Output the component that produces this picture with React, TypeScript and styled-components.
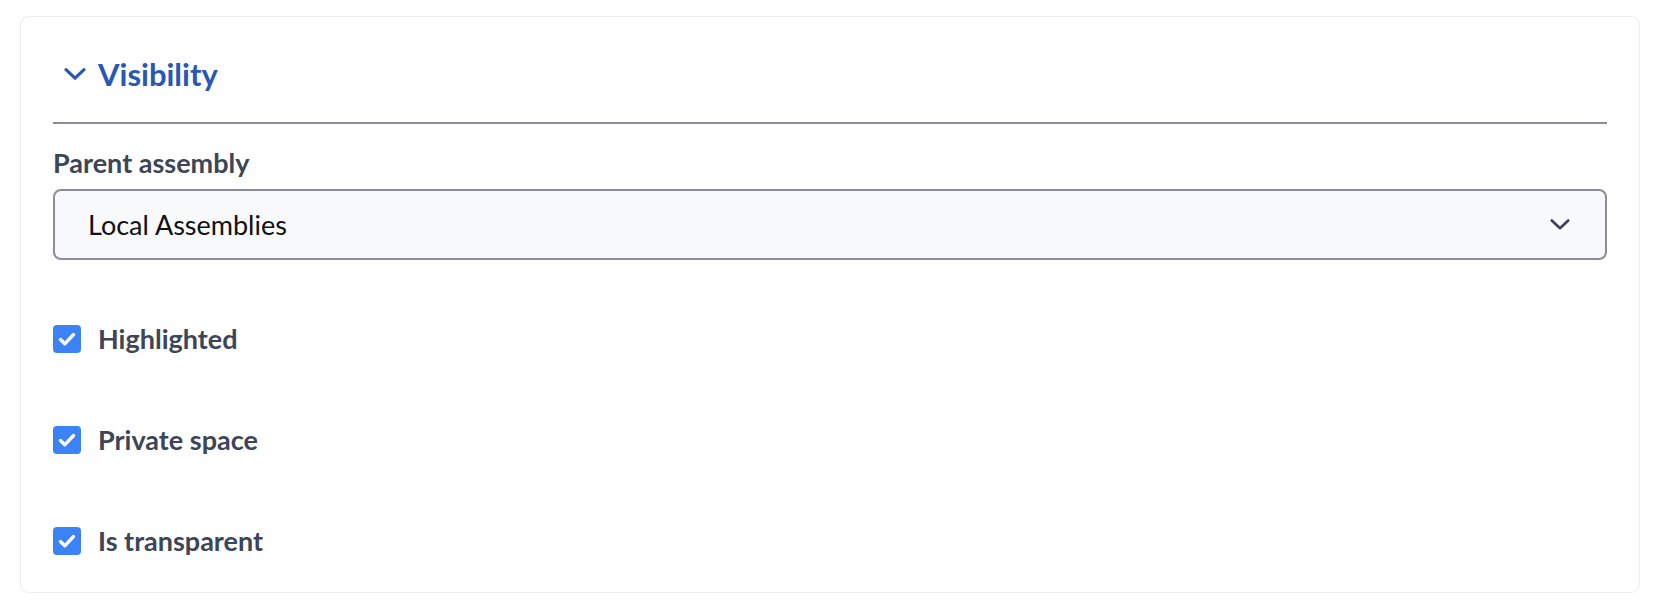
import React from "react";
import styled, { createGlobalStyle } from "styled-components";

const Global = createGlobalStyle`
  html, body { margin: 0; padding: 0; background: #ffffff; }
  body { font-family: "Lato", "Noto Sans", sans-serif; }
  * { box-sizing: border-box; }
`;

const Page = styled.div`
  padding: 16px 26px 0 20px;
`;

const Card = styled.section`
  width: 1620px;
  height: 577px;
  border: 1px solid #ececf2;
  border-radius: 9px;
  padding: 0 32px;
  background: #fff;
`;

const Header = styled.button`
  display: flex;
  align-items: center;
  gap: 11px;
  height: 40px;
  margin-top: 37px;
  padding: 0 0 0 10px;
  border: 0;
  background: none;
  color: #2a57b5;
  font-family: inherit;
  font-size: 31px;
  font-weight: 700;
  cursor: pointer;
`;

const Divider = styled.hr`
  margin: 28px 0 0;
  border: 0;
  height: 2px;
  background: #8b8e99;
`;

const Label = styled.label`
  display: block;
  margin-top: 23px;
  color: #3c4656;
  font-size: 27px;
  font-weight: 700;
  line-height: 32px;
`;

const Select = styled.div`
  display: flex;
  align-items: center;
  justify-content: space-between;
  height: 71px;
  margin-top: 10px;
  padding: 0 34px 0 33px;
  border: 2px solid #8b8e99;
  border-radius: 8px;
  background: #f8f9fb;
  color: #111;
  font-size: 27px;
`;

const Checks = styled.div`
  display: flex;
  flex-direction: column;
  gap: 72px;
  margin-top: 64px;
`;

const CheckRow = styled.label`
  display: flex;
  align-items: center;
  gap: 17px;
  height: 29px;
  color: #3c4656;
  font-size: 27px;
  font-weight: 700;
`;

const Box = styled.span`
  display: flex;
  align-items: center;
  justify-content: center;
  width: 28px;
  height: 28px;
  border-radius: 4px;
  background: #3b82f6;
`;

const Chevron = ({ size, color, w }: { size: number; color: string; w: number }) => (
  <svg width={size} height={size * 0.6} viewBox="0 0 24 14" fill="none">
    <path d="M3 2.5 L12 11 L21 2.5" stroke={color} strokeWidth={w} strokeLinecap="round" strokeLinejoin="round" />
  </svg>
);

const Check = () => (
  <svg width="28" height="28" viewBox="0 0 28 28" fill="none">
    <path d="M7.5 14.5 L11.8 18.8 L20.5 9.5" stroke="#fff" strokeWidth="3.4" strokeLinecap="round" strokeLinejoin="round" />
  </svg>
);

const items = ["Highlighted", "Private space", "Is transparent"];

export default function App() {
  return (
    <>
      <Global />
      <Page>
        <Card>
          <Header>
            <Chevron size={24} color="#2a57b5" w={3.2} />
            Visibility
          </Header>
          <Divider />
          <Label>Parent assembly</Label>
          <Select>
            <span>Local Assemblies</span>
            <Chevron size={22} color="#3b4350" w={2.8} />
          </Select>
          <Checks>
            {items.map((t) => (
              <CheckRow key={t}>
                <Box>
                  <Check />
                </Box>
                {t}
              </CheckRow>
            ))}
          </Checks>
        </Card>
      </Page>
    </>
  );
}
